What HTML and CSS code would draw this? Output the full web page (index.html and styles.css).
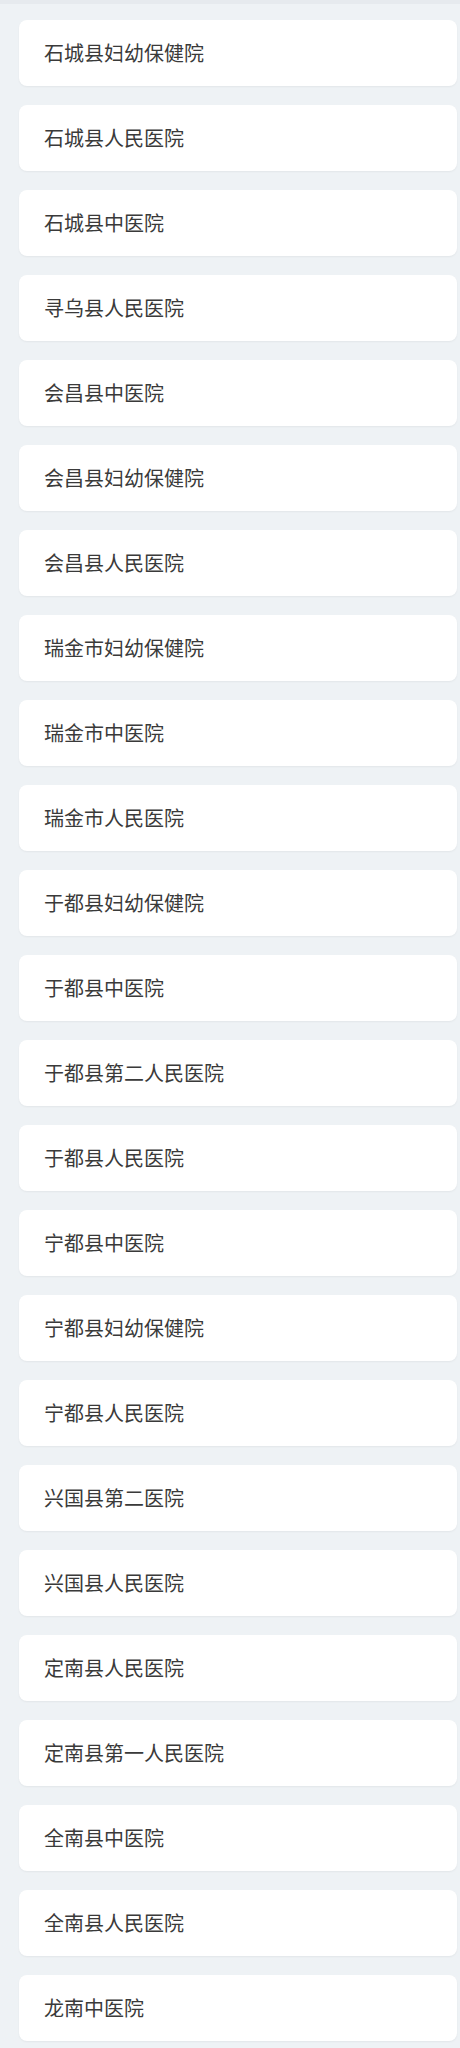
FILE: index.html
```html
<!DOCTYPE html>
<html lang="zh">
<head>
<meta charset="utf-8">
<link rel="stylesheet" href="styles.css">
</head>
<body>
<div class="topbar"></div>
<ul class="list">
<li class="item">石城县妇幼保健院</li>
<li class="item">石城县人民医院</li>
<li class="item">石城县中医院</li>
<li class="item">寻乌县人民医院</li>
<li class="item">会昌县中医院</li>
<li class="item">会昌县妇幼保健院</li>
<li class="item">会昌县人民医院</li>
<li class="item">瑞金市妇幼保健院</li>
<li class="item">瑞金市中医院</li>
<li class="item">瑞金市人民医院</li>
<li class="item">于都县妇幼保健院</li>
<li class="item">于都县中医院</li>
<li class="item">于都县第二人民医院</li>
<li class="item">于都县人民医院</li>
<li class="item">宁都县中医院</li>
<li class="item">宁都县妇幼保健院</li>
<li class="item">宁都县人民医院</li>
<li class="item">兴国县第二医院</li>
<li class="item">兴国县人民医院</li>
<li class="item">定南县人民医院</li>
<li class="item">定南县第一人民医院</li>
<li class="item">全南县中医院</li>
<li class="item">全南县人民医院</li>
<li class="item">龙南中医院</li>
</ul>
</body>
</html>
```
FILE: styles.css
```css
html, body {
  margin: 0;
  padding: 0;
  background: #eef2f5;
}
body {
  font-family: "Noto Sans CJK SC", "Noto Sans", sans-serif;
  color: #3a3a3a;
}
.topbar {
  height: 4px;
  background: #e6eaee;
}
.list {
  list-style: none;
  margin: 0;
  padding: 16px 3px 20px 19px;
  display: flex;
  flex-direction: column;
  gap: 19px;
}
.item {
  height: 66px;
  box-sizing: border-box;
  background: #ffffff;
  border-radius: 8px;
  box-shadow: 0 1px 2px rgba(0, 0, 0, 0.05);
  display: flex;
  align-items: center;
  padding-left: 25px;
  font-size: 20px;
  line-height: 1;
}
```
